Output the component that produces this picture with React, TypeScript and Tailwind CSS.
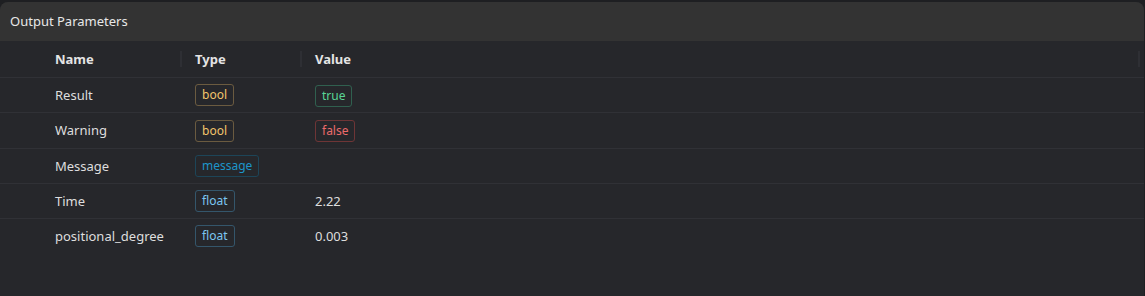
import React from "react";

type Badge = { text: string; cls: string };
type Row = { name: string; type: Badge; value?: Badge | string; h: string };

const boolB: Badge = { text: "bool", cls: "border-[#6b5b40] text-[#f2c46b]" };
const floatB: Badge = { text: "float", cls: "border-[#34566b] text-[#7cc6f0]" };

const rows: Row[] = [
  { name: "Result", type: boolB, value: { text: "true", cls: "border-[#30604f] text-[#5ad696]" }, h: "h-[35px]" },
  { name: "Warning", type: boolB, value: { text: "false", cls: "border-[#6e3536] text-[#ec6b6b]" }, h: "h-[36px]" },
  { name: "Message", type: { text: "message", cls: "border-[#1d4558] text-[#1d95c9]" }, h: "h-[35px]" },
  { name: "Time", type: floatB, value: "2.22", h: "h-[35px]" },
  { name: "positional_degree", type: floatB, value: "0.003", h: "h-[35px]" },
];

function Pill({ b }: { b: Badge }) {
  return (
    <span className={`inline-flex h-[22px] items-center rounded-[3px] border px-[6px] text-[12px] leading-none ${b.cls}`}>
      {b.text}
    </span>
  );
}

function Sep() {
  return <span className="absolute right-0 top-[10px] h-[16px] w-[2px] bg-[#2e2f34]" />;
}

export default function App() {
  return (
    <div
      className="h-[296px] w-[1145px] overflow-hidden bg-[#1e1f22] pt-[2px] pr-[1px] text-[13px] text-[#e4e4e4]"
      style={{ fontFamily: '"Noto Sans", "Open Sans", sans-serif' }}
    >
      <div className="flex h-[294px] flex-col overflow-hidden rounded-t-[8px] bg-[#26272b]">
        <div className="flex h-[39px] items-center bg-[#333333] pl-[10px] pt-[1px] text-[13px] text-[#e8e8e8]">
          Output Parameters
        </div>
        <div className="grid grid-cols-[182px_120px_1fr]">
          <div className="relative flex h-[36px] items-center pl-[55px] pt-[1px] font-bold">
            Name
            <Sep />
          </div>
          <div className="relative flex h-[36px] items-center pl-[13px] pt-[1px] font-bold">
            Type
            <Sep />
          </div>
          <div className="relative mr-[4px] flex h-[36px] items-center pl-[13px] pt-[1px] font-bold">
            Value
            <Sep />
          </div>
          {rows.map((r) => (
            <React.Fragment key={r.name}>
              <div className={`flex ${r.h} items-center border-t border-[#303136] pl-[55px] pt-[1px] text-[#dedede]`}>{r.name}</div>
              <div className={`flex ${r.h} items-center border-t border-[#303136] pl-[13px]`}>
                <Pill b={r.type} />
              </div>
              <div className={`flex ${r.h} items-center border-t border-[#303136] pl-[13px] pt-[1px] text-[#dedede]`}>
                {r.value === undefined ? null : typeof r.value === "string" ? r.value : <Pill b={r.value} />}
              </div>
            </React.Fragment>
          ))}
        </div>
      </div>
    </div>
  );
}
